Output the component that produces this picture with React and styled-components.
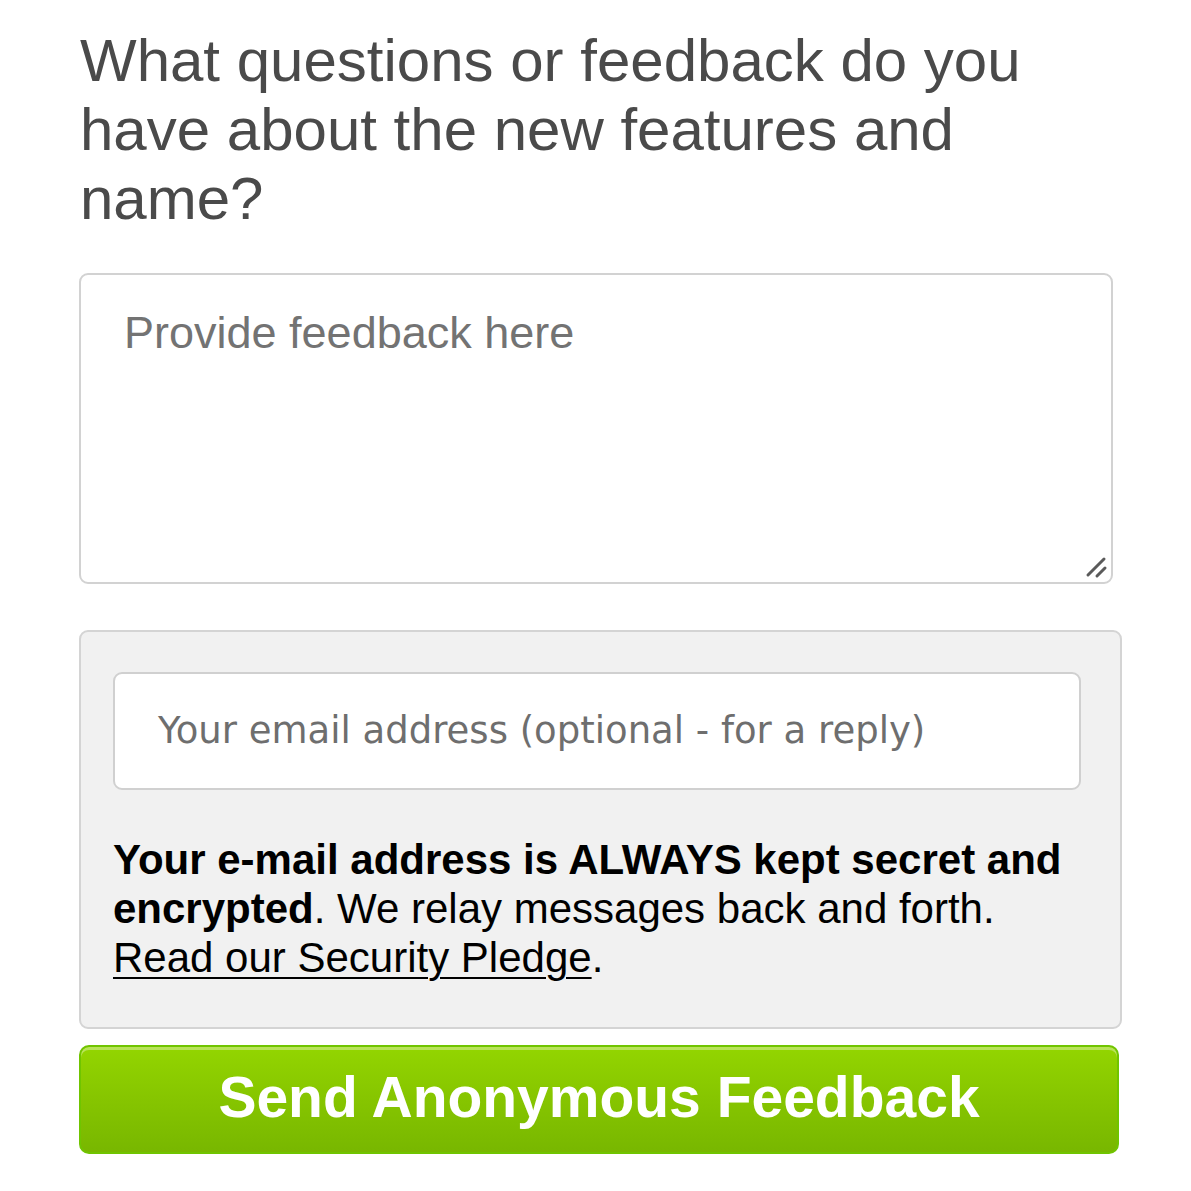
import React from 'react';
import styled, { createGlobalStyle } from 'styled-components';

const GlobalStyle = createGlobalStyle`
    body {
        margin: 0;
        background: #fff;
        font-family: "Liberation Sans", Arial, sans-serif;
    }
`;

const Page = styled.div`
    padding: 26px 0 0 79px;
    width: 1043px;
`;

const Heading = styled.h1`
    margin: 0 0 40px 1px;
    font-size: 60px;
    font-weight: normal;
    line-height: 69px;
    color: #4a4a4a;
    width: 1000px;
`;

const FeedbackArea = styled.div`
    position: relative;
    box-sizing: border-box;
    width: 1034px;
    height: 311px;
    border: 2px solid #d2d2d2;
    border-radius: 9px;
    padding: 30px 43px;
    font-size: 45px;
    line-height: 56px;
    color: #737373;
    margin-bottom: 46px;
`;

const Grip = styled.svg`
    position: absolute;
    right: 3px;
    bottom: 3px;
`;

const EmailBox = styled.div`
    box-sizing: border-box;
    width: 1043px;
    background: #f1f1f1;
    border: 2px solid #d4d4d4;
    border-radius: 9px;
    padding: 40px 30px 45px 32px;
    margin-bottom: 16px;
`;

const EmailInput = styled.div`
    box-sizing: border-box;
    width: 968px;
    height: 118px;
    background: #fff;
    border: 2px solid #d0d0d0;
    border-radius: 9px;
    display: flex;
    align-items: center;
    padding: 0 0 2px 43px;
    font-family: "DejaVu Sans", sans-serif;
    font-size: 37px;
    color: #6e6e6e;
    margin-bottom: 45px;
`;

const Note = styled.p`
    margin: 0;
    font-size: 42px;
    line-height: 49px;
    color: #000;

    a {
        color: #000;
        text-decoration: underline;
        text-decoration-thickness: 2px;
        text-underline-offset: 5px;
    }
`;

const SendButton = styled.button`
    display: block;
    box-sizing: border-box;
    width: 1040px;
    height: 109px;
    border: 2px solid #70c400;
    border-radius: 10px;
    background: linear-gradient(to bottom, #93d500 0%, #86c500 50%, #78b700 100%);
    box-shadow: inset 0 3px 0 rgba(255, 255, 255, 0.35);
    color: #fff;
    font-family: "Liberation Sans", Arial, sans-serif;
    font-size: 57px;
    font-weight: bold;
    padding: 0 0 6px;
    cursor: pointer;
`;

export default function App() {
    return (
        <>
            <GlobalStyle />
            <Page>
                <Heading>What questions or feedback do you have about the new features and name?</Heading>
                <FeedbackArea>
                    Provide feedback here
                    <Grip width="24" height="24" viewBox="0 0 24 24">
                        <path d="M4 20 L20 4 M13 21 L21 13" stroke="#5a5a5a" strokeWidth="3" strokeLinecap="round" />
                    </Grip>
                </FeedbackArea>
                <EmailBox>
                    <EmailInput>Your email address (optional - for a reply)</EmailInput>
                    <Note>
                        <b>Your e-mail address is ALWAYS kept secret and encrypted</b>. We relay messages back and forth.{' '}
                        <a href="#">Read our Security Pledge</a>.
                    </Note>
                </EmailBox>
                <SendButton>Send Anonymous Feedback</SendButton>
            </Page>
        </>
    );
}
